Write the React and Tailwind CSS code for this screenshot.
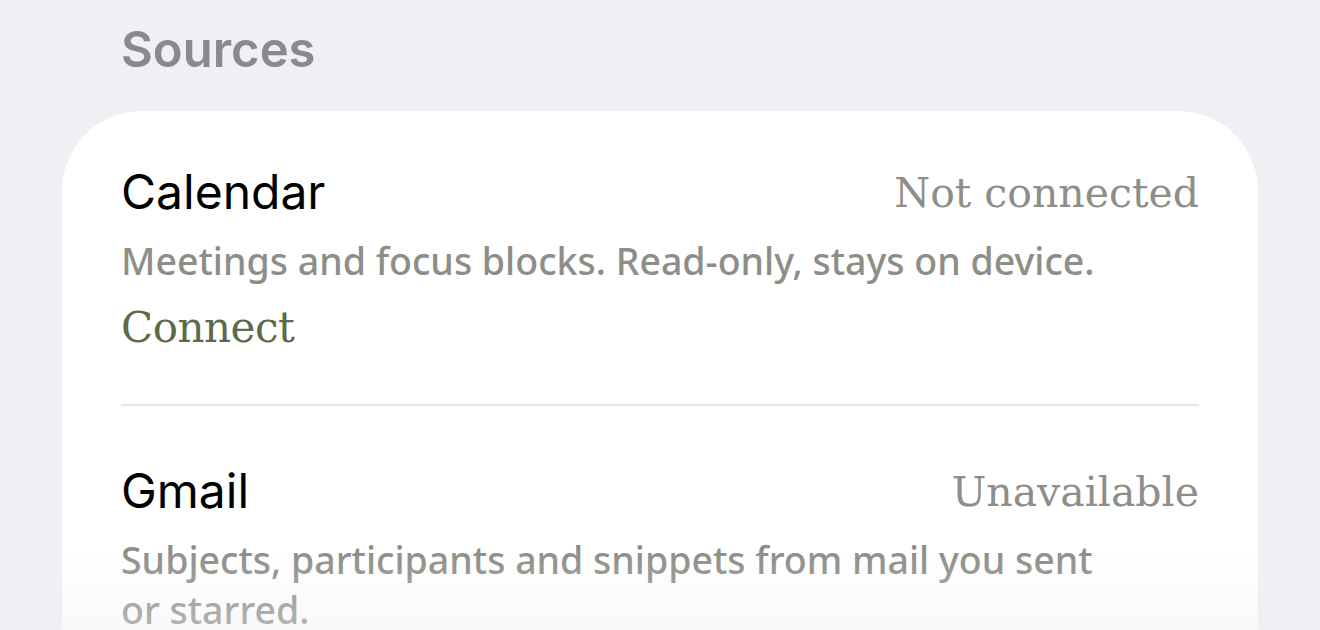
import React from "react";

const sans = { fontFamily: "Inter, 'Noto Sans', sans-serif" };

/**
 * One row of the Sources card: title + status on the right, description, optional action.
 */
const SourceRow = ({ title, status, description, action }) => {
  return (
    <div>
      <div className="flex items-baseline justify-between">
        <span className="font-['Inter',sans-serif] text-[48px] leading-[58px] text-black">
          {title}
        </span>
        <span className="relative top-[-2px] font-['DejaVu_Serif',serif] text-[41px] leading-[58px] text-[#8e8e88]">
          {status}
        </span>
      </div>
      <p className="mt-[12px] max-w-[1000px] font-['Noto_Sans',sans-serif] font-medium text-[37.5px] leading-[50px] text-[#8e8e88]">
        {description}
      </p>
      {action && (
        <button className="mt-[14px] font-['DejaVu_Serif',serif] text-[42px] leading-[56px] text-[#5b6a4b] tracking-[-0.5px]">
          {action}
        </button>
      )}
    </div>
  );
};

export default function App() {
  return (
    <div className="relative h-[630px] w-[1320px] overflow-hidden bg-[#f0eff4]">
      <h2
        className="pl-[121px] pt-[20px] text-[49px] font-semibold leading-[60px] text-[#8a8a8e]"
        style={sans}
      >
        Sources
      </h2>

      <div className="mx-[62px] mt-[31px] rounded-[80px] bg-white px-[59px] pt-[52px] pb-[160px]">
        <SourceRow
          title="Calendar"
          status="Not connected"
          description="Meetings and focus blocks. Read-only, stays on device."
          action="Connect"
        />

        <div className="mt-[48px] mb-[56px] h-[2px] bg-[#e6e6e8]" />

        <SourceRow
          title="Gmail"
          status="Unavailable"
          description="Subjects, participants and snippets from mail you sent or starred."
        />
      </div>

      {/* soft fade at the bottom edge */}
      <div className="pointer-events-none absolute inset-x-0 bottom-0 h-[80px] bg-gradient-to-b from-transparent to-[#f0eff4]/40" />
    </div>
  );
}
